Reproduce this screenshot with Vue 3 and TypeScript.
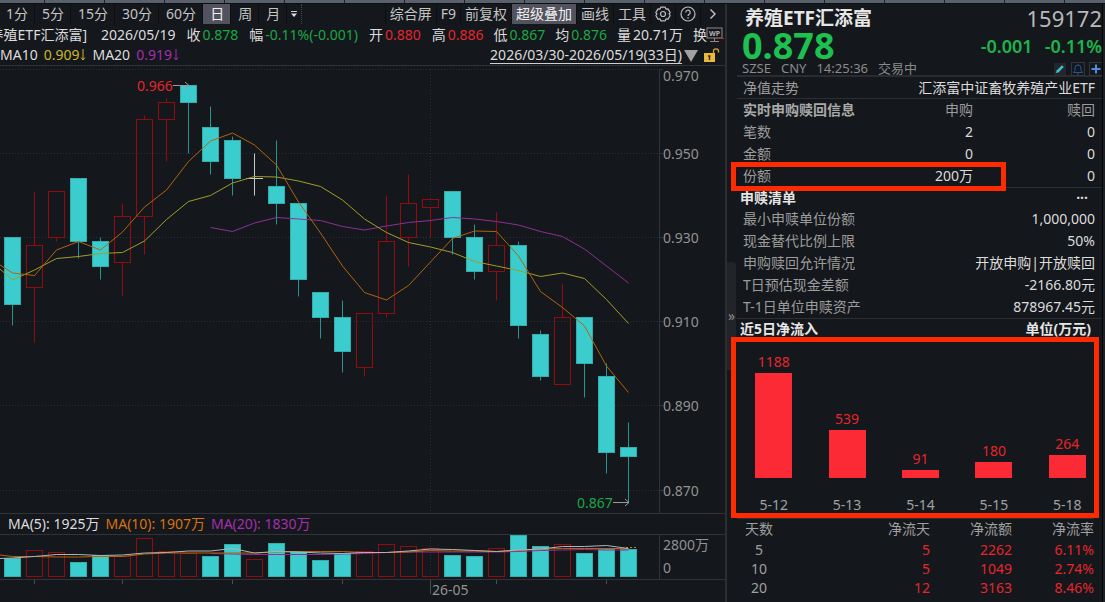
<script setup lang="ts">
type Candle = [open: number, high: number, low: number, close: number]

// Daily prices in thousandths, oldest first
const candles: Candle[] = [
  [930, 930, 909, 914], [918, 941, 905, 928], [930, 941, 929, 941], [944, 944, 925, 929],
  [929, 930, 920, 923], [924, 938, 916, 935], [935, 959, 926, 958], [958, 963, 948, 962],
  [966, 966, 950, 962], [956, 961, 945, 948], [953, 954, 940, 944], [944, 950, 940, 944],
  [942, 953, 933, 938], [938, 938, 916, 920], [917, 917, 906, 911], [911, 915, 898, 903],
  [899, 912, 897, 912], [912, 940, 911, 929], [930, 945, 923, 938], [937, 939, 930, 939],
  [941, 941, 926, 930], [930, 933, 920, 922], [922, 936, 915, 928], [928, 929, 906, 909],
  [907, 908, 896, 897], [895, 919, 895, 911], [911, 911, 892, 900], [897, 900, 874, 879],
  [880, 886, 867, 878],
]

const xAt = (i: number): number => 12.5 + i * 22
const yAt = (p: number): number => Math.floor(69 + (970 - p) * 4.21) + 0.5

const bars = candles.map(([open, high, low, close], i) => {
  const top = yAt(Math.max(open, close))
  const bottom = yAt(Math.min(open, close))
  return {
    x: xAt(i), top, bottom, high: yAt(high), low: yAt(low),
    kind: open === close ? 'flat' : close > open ? 'up' : 'down',
  }
})

const volumeTops = [558, 550, 552, 562, 555, 556, 538, 551, 553, 556, 544, 559, 543, 551, 560, 553, 551, 544, 546, 548, 555, 556, 548, 535, 546, 544, 553, 548, 549]
const volumeUp = new Set([1, 2, 5, 6, 7, 8, 11, 16, 17, 18, 19, 22, 25])

const line = (ys: number[], from = 0, lead?: number): string =>
  (lead === undefined ? '' : `0,${lead} `) + ys.map((y, i) => `${xAt(from + i)},${y}`).join(' ')

const ma5 = line([273, 275.5, 250, 241.5, 250, 232, 207, 190, 161.5, 141, 133, 145, 165, 202, 233, 266, 292.5, 300, 285.5, 262, 238.5, 231, 231.5, 256, 291.5, 307.5, 326, 366, 392.5], 0, 265)
const ma10 = line([280, 270, 258.5, 256.5, 253.5, 252.5, 241, 219.5, 201.5, 195.5, 183, 176.5, 177, 181, 186.5, 200, 219, 232.5, 242.5, 247, 252.5, 261.5, 266, 270.5, 276.5, 273, 278.5, 299.5, 323.5], 0, 269)
const ma20 = line([227.5, 231.5, 223, 217.5, 219, 220.5, 226.5, 230, 226, 222.5, 220.5, 217.5, 219, 221.5, 225, 231.5, 236.5, 249, 266, 283], 9)

const vol5 = line([558, 556.5, 554.5, 554.5, 555.5, 555, 553, 552.5, 551, 551, 548.5, 553, 551.5, 552, 553, 553.5, 552.5, 552.5, 551, 549, 549.5, 550.5, 551.5, 550, 549, 546.5, 546.5, 545.5, 548.5], 0, 558.5)
const vol10 = line([556.5, 556.5, 557, 557, 556.5, 556.5, 554, 553, 553, 553, 553, 553, 552, 551.5, 551.5, 551.5, 552.5, 552.5, 552, 550.5, 551, 551, 551.5, 550.5, 549, 548.5, 548.5, 548.5, 548.5], 0, 555)
const vol20 = line([553.5, 554, 554.5, 554.5, 554.5, 554.5, 554, 553.5, 552.5, 552, 552, 552, 552, 552, 551.5, 550.5, 550, 549.5, 550, 550], 9)

const levels = [970, 950, 930, 910, 890, 870]
const periods = ['1分', '5分', '15分', '30分', '60分', '日', '周', '月']
const tools = ['综合屏', 'F9', '前复权', '超级叠加', '画线', '工具']

const quotes = [
  { label: '', value: '2026/05/19', tone: 'plain' },
  { label: '收', value: '0.878', tone: 'green' },
  { label: '幅', value: '-0.11%(-0.001)', tone: 'green' },
  { label: '开', value: '0.880', tone: 'red' },
  { label: '高', value: '0.886', tone: 'red' },
  { label: '低', value: '0.867', tone: 'green' },
  { label: '均', value: '0.876', tone: 'green' },
  { label: '量', value: '20.71万', tone: 'plain' },
  { label: '换', value: '', tone: 'plain' },
]

const orders = [
  ['笔数', '2', '0'],
  ['金额', '0', '0'],
  ['份额', '200万', '0'],
]
const listing = [
  ['最小申赎单位份额', '1,000,000'],
  ['现金替代比例上限', '50%'],
  ['申购赎回允许情况', '开放申购|开放赎回'],
  ['T日预估现金差额', '-2166.80元'],
  ['T-1日单位申赎资产', '878967.45元'],
]
const inflow = [
  { day: '5-12', value: 1188 },
  { day: '5-13', value: 539 },
  { day: '5-14', value: 91 },
  { day: '5-15', value: 180 },
  { day: '5-18', value: 264 },
]
const barHeight = (v: number): string => `${Math.round((v / 1188) * 105)}px`
const totals = [
  { days: 5, net: 5, amount: '2262', rate: '6.11%', tone: 'red' },
  { days: 10, net: 5, amount: '1049', rate: '2.74%', tone: 'red' },
  { days: 20, net: 12, amount: '3163', rate: '8.46%', tone: 'red' },
  { days: 60, net: 17, amount: '894', rate: '0.79%', tone: 'green' },
]
</script>

<template>
  <div class="terminal">
    <div class="strip"></div>
    <div class="body">
      <main class="left">
        <nav class="toolbar">
          <button v-for="p in periods" :key="p" class="period" :class="{ active: p === '日' }">{{ p }}</button>
          <button class="more" aria-label="更多周期">
            <svg width="8" height="8" viewBox="0 0 8 8"><path d="M1 1.500h6" stroke="#d0d0d0" /><path d="M1 3.500h6L4 7z" fill="#e0e0e0" /></svg>
          </button>
          <div class="tools">
            <button v-for="t in tools" :key="t" class="tool" :class="{ active: t === '超级叠加' }">{{ t }}</button>
            <button class="tool icon" aria-label="设置">
              <svg width="16" height="16" viewBox="0 0 16 16" fill="none" stroke="#bdbdbd" stroke-width="1.200">
                <path d="M5.800 1.200h4.400l.8 1.900 2-.2 2.200 3.700L14 8l1.200 1.500-2.200 3.600-2-.2-.8 1.900H5.800L5 12.900l-2 .2L.8 9.500 2 8 .8 6.600 3 2.900l2 .2z" stroke-linejoin="round" />
                <circle cx="8" cy="8" r="2.500" />
              </svg>
            </button>
            <button class="tool icon" aria-label="帮助">
              <svg width="16" height="16" viewBox="0 0 16 16" fill="none" stroke="#bdbdbd" stroke-width="1.200">
                <circle cx="8" cy="8" r="7" /><path d="M5.800 6.500a2.200 2.200 0 1 1 3.400 1.700c-.9.600-1.200.9-1.200 1.800M8 11.300v1.400" />
              </svg>
            </button>
            <button class="tool icon" aria-label="展开">
              <svg width="16" height="16" viewBox="0 0 16 16" fill="none" stroke="#c8c8c8" stroke-width="1.400"><path d="M5.500 3.500 10 8l-4.500 4.500" /></svg>
            </button>
          </div>
        </nav>

        <div class="quotes">
          <span class="name">[养殖ETF汇添富]</span>
          <span v-for="(q, i) in quotes" :key="i" class="quote" :class="{ first: i === 0 }">
            <span v-if="q.label">{{ q.label }}</span><span v-if="q.value" :class="q.tone">{{ q.value }}</span>
          </span>
          <svg class="wp" width="18" height="16" viewBox="0 0 18 16">
            <rect x="1" y="1" width="15" height="10" fill="#14171b" stroke="#8c8c8c" />
            <path d="M8.500 11v3M4 14.500h9" stroke="#8c8c8c" />
            <text x="3" y="9" font-size="7" font-weight="700" fill="#b0b0b0">WP</text>
            <path d="M10 11.500h8" stroke="#d8232a" stroke-dasharray="2 1" />
          </svg>
        </div>

        <div class="averages">
          <span>MA10</span>
          <span class="yellow">0.909<svg class="arrow" width="6" height="12" viewBox="0 0 6 12"><path d="M3 0v11M1 8.500l2 2.500 2-2.500" fill="none" stroke="currentColor" /></svg></span>
          <span>MA20</span>
          <span class="purple">0.919<svg class="arrow" width="6" height="12" viewBox="0 0 6 12"><path d="M3 0v11M1 8.500l2 2.500 2-2.500" fill="none" stroke="currentColor" /></svg></span>
          <button class="range">2026/03/30-2026/05/19(33日)</button>
          <svg width="14" height="13" viewBox="0 0 14 13"><path d="M0 1h14L7 13z" fill="#a0a0a0" /></svg>
          <button class="lock" aria-label="解锁">
            <svg width="16" height="14" viewBox="0 0 16 14">
              <rect x="0" y="5" width="11" height="9" fill="#e9b83c" />
              <path d="M9.500 5V3a2 2 0 0 1 2-2h1a2 2 0 0 1 2 2v1.500" fill="none" stroke="#c79a2c" stroke-width="1.400" />
              <path d="M4 8h2.500M5.500 8v4" stroke="#3a2c08" stroke-width="1.400" />
            </svg>
          </button>
        </div>

        <svg class="chart" viewBox="0 65 725 449" role="img" aria-label="日K线">
          <path d="M0 65.500H725M0 513.500H725M659.500 69V513" class="frame" />
          <path d="M430.500 69V513" class="grid" />
          <g v-for="l in levels" :key="l">
            <path :d="`M0 ${yAt(l)}H659`" class="grid" />
            <path :d="`M659 ${yAt(l)}H663`" class="frame" />
            <text x="663" :y="yAt(l) + (l === 970 ? 11 : 5)" class="axis">{{ (l / 1000).toFixed(3) }}</text>
          </g>
          <g v-for="(b, i) in bars" :key="i" :class="b.kind">
            <path v-if="b.kind === 'flat'" :d="`M${b.x - 8.5} ${b.top}h17`" />
            <path v-if="b.high < b.top || b.kind === 'flat'" :d="`M${b.x} ${b.high}V${b.top}`" />
            <path v-if="b.low > b.bottom || b.kind === 'flat'" :d="`M${b.x} ${b.bottom}V${b.low}`" />
            <rect v-if="b.kind !== 'flat'" :x="b.x - 8" :y="b.top" width="16" :height="b.bottom - b.top" />
          </g>
          <polyline :points="ma20" class="ma purple-line" />
          <polyline :points="ma10" class="ma yellow-line" />
          <polyline :points="ma5" class="ma orange-line" />
          <text x="137" y="91" class="high">0.966</text>
          <path d="M173 85.500h16M185 82l4 3.500-4 3.500" class="pointer" />
          <text x="577" y="507.500" class="low">0.867</text>
          <path d="M613 502.500h16M625 499l4 3.500-4 3.500" class="pointer" />
        </svg>

        <div class="volume-head">
          <span>MA(5): 1925万</span>
          <span class="orange">MA(10): 1907万</span>
          <span class="purple">MA(20): 1830万</span>
        </div>

        <svg class="chart" viewBox="0 534 725 68" role="img" aria-label="成交量">
          <path d="M0 534.500H725M0 579.500H725M659.500 534V579" class="frame" />
          <path d="M430.500 534V579" class="grid" />
          <path d="M34.500 580v4M122.500 580v4M232.500 580v4M342.500 580v4M430.500 580v14M496.500 580v4M606.500 580v4" class="tick" />
          <g v-for="(t, i) in volumeTops" :key="i" :class="volumeUp.has(i) ? 'up' : 'down'">
            <rect :x="xAt(i) - 8" :y="t + 0.5" width="16" :height="576 - t" />
          </g>
          <polyline :points="vol20" class="ma purple-line" />
          <polyline :points="vol10" class="ma orange-line" />
          <polyline :points="vol5" class="ma white-line" />
          <path d="M622 547.500h16" class="forecast" />
          <text x="663" y="550" class="axis">2800万</text>
          <text x="663" y="573" class="axis">0</text>
          <text x="432" y="595" class="axis">26-05</text>
        </svg>
      </main>

      <div class="gutter"><button class="collapse" aria-label="收起">»</button></div>

      <aside class="right">
        <header class="summary">
          <div class="pair title-row"><h1>养殖ETF汇添富</h1><span class="code">159172</span></div>
          <div class="pair price-row"><strong class="price">0.878</strong><span class="change"><b>-0.001</b><b>-0.11%</b></span></div>
          <div class="pair status">
            <span class="market"><span>SZSE</span><span>CNY</span><span>14:25:36</span><span>交易中</span></span>
            <span class="actions">
              <button class="edit" aria-label="编辑"><svg width="12" height="12" viewBox="0 0 12 12"><path d="M2 10l.6-2.400L8 2.200 9.800 4 4.400 9.400z" fill="#35c3d0" /></svg></button>
              <button class="boxed" aria-label="提醒"><svg width="12" height="12" viewBox="0 0 12 12" fill="none" stroke="#24569a"><path d="M1.500 9.500h9L9 7.500V5a3 3 0 0 0-6 0v2.500zM5 11h2M6 1v1" /></svg></button>
              <button class="boxed" aria-label="添加"><svg width="12" height="12" viewBox="0 0 12 12"><path d="M6 1.500v9M1.500 6h9" stroke="#4f8fd8" stroke-width="2" /></svg></button>
            </span>
          </div>
        </header>

        <div class="pair trend"><span class="label">净值走势</span><span>汇添富中证畜牧养殖产业ETF</span></div>

        <section class="orders">
          <table>
            <thead><tr><th>实时申购赎回信息</th><td class="label">申购</td><td class="label">赎回</td></tr></thead>
            <tbody><tr v-for="r in orders" :key="r[0]"><td class="label">{{ r[0] }}</td><td>{{ r[1] }}</td><td>{{ r[2] }}</td></tr></tbody>
          </table>
          <div class="mark mark-row"></div>
        </section>

        <section class="listing">
          <div class="pair heading"><h2>申赎清单</h2><button class="dots" aria-label="更多">···</button></div>
          <table>
            <tbody><tr v-for="r in listing" :key="r[0]"><td class="label">{{ r[0] }}</td><td>{{ r[1] }}</td></tr></tbody>
          </table>
        </section>

        <div class="pair heading"><h2>近5日净流入</h2><h2 class="unit">单位(万元)</h2></div>
        <section class="inflow">
          <div v-for="d in inflow" :key="d.day" class="day">
            <span class="amount">{{ d.value }}</span>
            <div class="bar" :style="{ height: barHeight(d.value) }"></div>
            <span class="date">{{ d.day }}</span>
          </div>
          <div class="mark mark-chart"></div>
        </section>

        <table class="totals">
          <thead><tr><th>天数</th><th>净流天</th><th>净流额</th><th>净流率</th></tr></thead>
          <tbody>
            <tr v-for="t in totals" :key="t.days">
              <td>{{ t.days }}</td><td class="red">{{ t.net }}</td><td :class="t.tone">{{ t.amount }}</td><td :class="t.tone">{{ t.rate }}</td>
            </tr>
          </tbody>
        </table>
      </aside>
      <div class="edge"></div>
    </div>
  </div>
</template>

<style>
body { background: #14171b; }
</style>

<style scoped>
* { box-sizing: border-box; }
.terminal {
  height: 100vh;
  overflow: hidden;
  display: flex;
  flex-direction: column;
  background: #14171b;
  color: #dcdcdc;
  font-family: "Noto Sans", "Noto Sans CJK SC", sans-serif;
  font-size: 14px;
  line-height: 20px;
  white-space: nowrap;
}
button { background: none; border: 0; padding: 0; margin: 0; font: inherit; color: inherit; cursor: pointer; }
svg { display: block; flex: none; }
h1, h2 { margin: 0; font-size: 14px; font-weight: 700; color: #e6e6e6; }
table { width: 100%; border-collapse: collapse; }
td, th { padding: 0; height: 22px; line-height: 20px; font-weight: 400; text-align: right; }
td:first-child, th:first-child { text-align: left; }
.strip {
  flex: none;
  height: 4px;
  border-bottom: 1px solid #0b0d10;
  background: repeating-linear-gradient(90deg, #59616c 0 59px, #20242a 59px 60px) -15px 0;
}
.body { flex: 1; min-height: 0; display: flex; }
.left { flex: 1; min-width: 0; overflow: hidden; }
.red { color: #e5262d; }
.green { color: #1aa846; }
.yellow { color: #cdb728; }
.orange { color: #d9720f; }
.purple { color: #a52fae; }
.label { color: #9c9c9c; }
.pair { display: flex; justify-content: space-between; align-items: center; }

.toolbar { display: flex; height: 20px; color: #c4c4c4; }
.period { padding: 0 6px 0 7px; border-right: 1px solid #0c0e11; }
.period:first-child { padding-left: 6px; }
.active { background: #52535e; color: #f0f0f0; }
.more { width: 15px; display: flex; align-items: center; justify-content: center; border-right: 1px dotted #44474c; }
.tools { margin-left: auto; display: flex; }
.tool { padding: 0 4px; border-left: 1px solid #0c0e11; }
.tool.icon { width: 25px; display: flex; align-items: center; justify-content: center; padding: 0; }

.quotes { display: flex; height: 21px; align-items: center; }
.name { width: 87px; flex: none; display: flex; justify-content: flex-end; overflow: hidden; }
.quote { display: flex; gap: 2px; margin-left: 11px; }
.quote.first { margin-left: 14px; }
.quote:nth-child(n + 7) { margin-left: 10px; }
.wp { margin-left: -1px; }

.averages { display: flex; height: 20px; align-items: center; gap: 6px; }
.averages span { display: flex; align-items: center; }
.arrow { margin-left: 1px; }
.range { margin-left: auto; margin-right: -4px; line-height: 16px; border-bottom: 1px solid #cfcfcf; }
.lock { margin-right: 5px; }

.chart { width: 100%; height: auto; }
.frame { stroke: #303338; fill: none; }
.tick { stroke: #4a4d52; fill: none; }
.grid { stroke: #2b2e33; stroke-dasharray: 1 2; fill: none; }
.axis { font-size: 14px; fill: #929292; }
.high { font-size: 14px; fill: #e5262d; }
.low { font-size: 14px; fill: #1aa846; }
.pointer { stroke: #9a9a9a; fill: none; }
.up path, .up rect { stroke: #940b0e; fill: none; }
.down path { stroke: #279494; fill: none; }
.down rect { stroke: #33adae; fill: #3bcdcd; }
.flat path { stroke: #c8c8c8; fill: none; }
.ma { fill: none; stroke-width: 1; }
.orange-line { stroke: #b0640f; }
.yellow-line { stroke: #a19c2c; }
.purple-line { stroke: #8f2f98; }
.white-line { stroke: #b4b4b4; }
.forecast { stroke: #b08a2a; stroke-dasharray: 2 2; }
.volume-head { display: flex; height: 20px; align-items: center; gap: 6px; padding-left: 8px; }

.gutter { width: 12px; flex: none; border-left: 2px solid #2c2e33; display: flex; align-items: center; }
.collapse { width: 9px; height: 108px; margin-top: 26px; background: #222429; color: #8d8d8d; border-radius: 0 4px 4px 0; }
.right { width: 365px; flex: none; }
.edge { width: 3px; flex: none; border-left: 1px solid #050607; background: #1c1f24; }

.summary { height: 73px; border-bottom: 2px solid #292c30; padding-left: 5px; }
.title-row { height: 28px; padding-left: 3px; }
.summary h1 { font-size: 19px; }
.code { font-size: 22px; color: #b9b9b9; }
.price-row { height: 28px; }
.price { font-size: 36px; line-height: 28px; color: #1cc150; }
.change { display: flex; gap: 12px; font-size: 18px; color: #1cb44b; }
.change b { font-weight: 600; }
.status { height: 17px; line-height: 17px; font-size: 13px; color: #8b8b8b; }
.market { display: flex; gap: 10px; }
.actions { display: flex; gap: 6px; }
.actions .boxed { outline: 1px solid #33373d; }
.actions .edit { background: #23272c; }

.trend { height: 22px; padding: 0 7px 0 6px; border-bottom: 1px solid #2b2e32; }
.orders { position: relative; padding: 0 7px 0 6px; border-bottom: 1px solid #2b2e32; }
.orders th { font-weight: 700; color: #a9a9a9; width: 140px; }
.orders td:nth-child(2) { width: 90px; }
.mark { position: absolute; border: 5px solid #ff2a00; pointer-events: none; }
.mark-row { left: -6px; bottom: -4px; width: 275px; height: 29px; }
.listing { border-bottom: 1px solid #2b2e32; }
.listing table { margin-left: 6px; width: calc(100% - 13px); }
.heading { height: 20px; padding: 0 11px 0 3px; }
.dots { margin-right: 3px; font-weight: 700; line-height: 16px; }
.inflow { position: relative; height: 179px; margin-right: -2px; display: grid; grid-template-columns: repeat(5, 1fr); }
.day { display: flex; flex-direction: column; align-items: center; justify-content: flex-end; padding-bottom: 3px; }
.amount { color: #e5262d; line-height: 18px; margin-bottom: 2px; }
.bar { width: 37px; background: #fc2a34; margin-bottom: 17px; }
.date { color: #a0a0a0; line-height: 20px; }
.mark-chart { left: -6px; right: 5px; top: -2px; bottom: 0; }
.totals { border-top: 1px solid #2b2e32; table-layout: fixed; width: calc(100% - 8px); color: #a0a0a0; }
.totals th { height: 21px; }
.totals td { height: 19px; line-height: 19px; }
.totals th:first-child, .totals td:first-child { width: 44px; text-align: center; }
.totals th:nth-child(n + 3) { width: 82px; }
</style>
